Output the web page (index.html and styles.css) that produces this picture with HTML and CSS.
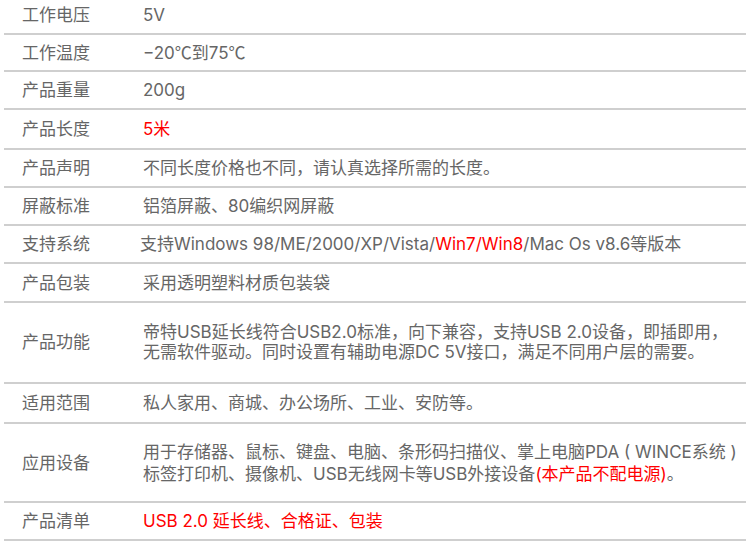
FILE: index.html
```html
<!DOCTYPE html>
<html lang="zh-CN">
<head>
    <meta charset="UTF-8">
    <title>USB 延长线 参数</title>
    <link rel="stylesheet" href="styles.css">
</head>
<body>

<div class="spec">
    <div class="row row-first">
        <div class="label">工作电压</div>
        <div class="value">5V</div>
    </div>
    <div class="row row-37">
        <div class="label">工作温度</div>
        <div class="value">−20<span class="cjk">℃</span>到75<span class="cjk">℃</span></div>
    </div>
    <div class="row">
        <div class="label">产品重量</div>
        <div class="value">200g</div>
    </div>
    <div class="row row-40">
        <div class="label">产品长度</div>
        <div class="value red">5米</div>
    </div>
    <div class="row">
        <div class="label">产品声明</div>
        <div class="value">不同长度价格也不同，请认真选择所需的长度。</div>
    </div>
    <div class="row">
        <div class="label">屏蔽标准</div>
        <div class="value">铝箔屏蔽、80编织网屏蔽</div>
    </div>
    <div class="row">
        <div class="label">支持系统</div>
        <div class="value value-tight">支持Windows 98/ME/2000/XP/Vista/<span class="red">Win7/Win8</span>/Mac Os v8.6等版本</div>
    </div>
    <div class="row row-39">
        <div class="label">产品包装</div>
        <div class="value">采用透明塑料材质包装袋</div>
    </div>
    <div class="row row-tall">
        <div class="label">产品功能</div>
        <div class="value">帝特USB延长线符合USB2.0标准，向下兼容，支持USB 2.0设备，即插即用，<br>无需软件驱动。同时设置有辅助电源DC 5V接口，满足不同用户层的需要。</div>
    </div>
    <div class="row row-40">
        <div class="label">适用范围</div>
        <div class="value">私人家用、商城、办公场所、工业、安防等。</div>
    </div>
    <div class="row row-tall row-tall-b">
        <div class="label">应用设备</div>
        <div class="value">用于存储器、鼠标、键盘、电脑、条形码扫描仪、掌上电脑PDA ( WINCE系统 )<br>标签打印机、摄像机、USB无线网卡等USB外接设备<span class="red">(本产品不配电源)</span>。</div>
    </div>
    <div class="row">
        <div class="label">产品清单</div>
        <div class="value red">USB 2.0 延长线、合格证、包装</div>
    </div>
</div>

</body>
</html>
```

FILE: styles.css
```css
/* Basic Reset */
* {
    box-sizing: border-box;
    margin: 0;
    padding: 0;
}

body {
    background: #fff;
    font-family: "Inter", "Noto Sans CJK SC", sans-serif;
    font-size: 17px;
    color: #666;
}

/* Spec table */
.spec {
    width: 742px;
    margin-left: 4px;
}

.row {
    display: flex;
    align-items: center;
    padding: 8px 0;
    line-height: 20px;
    border-bottom: 2px solid #cfcfcf;
}

.row-first {
    padding: 5px 0 8px;
}

.row-37 {
    padding: 8px 0 7px;
}

.row-39 {
    padding: 9px 0 8px;
}

.row-40 {
    padding: 9px 0;
}

.row-tall {
    padding: 19px 0 20px;
    line-height: 20px;
}

.row-tall-b {
    padding: 17px 0 16px;
    line-height: 22px;
}

.label {
    flex: 0 0 139px;
    padding-left: 18px;
}

.value {
    white-space: nowrap;
}

.value-tight {
    margin-left: -3px;
}

.cjk {
    font-family: "Noto Sans CJK SC", sans-serif;
    line-height: 1;
}

.red {
    color: #f00;
}
```
